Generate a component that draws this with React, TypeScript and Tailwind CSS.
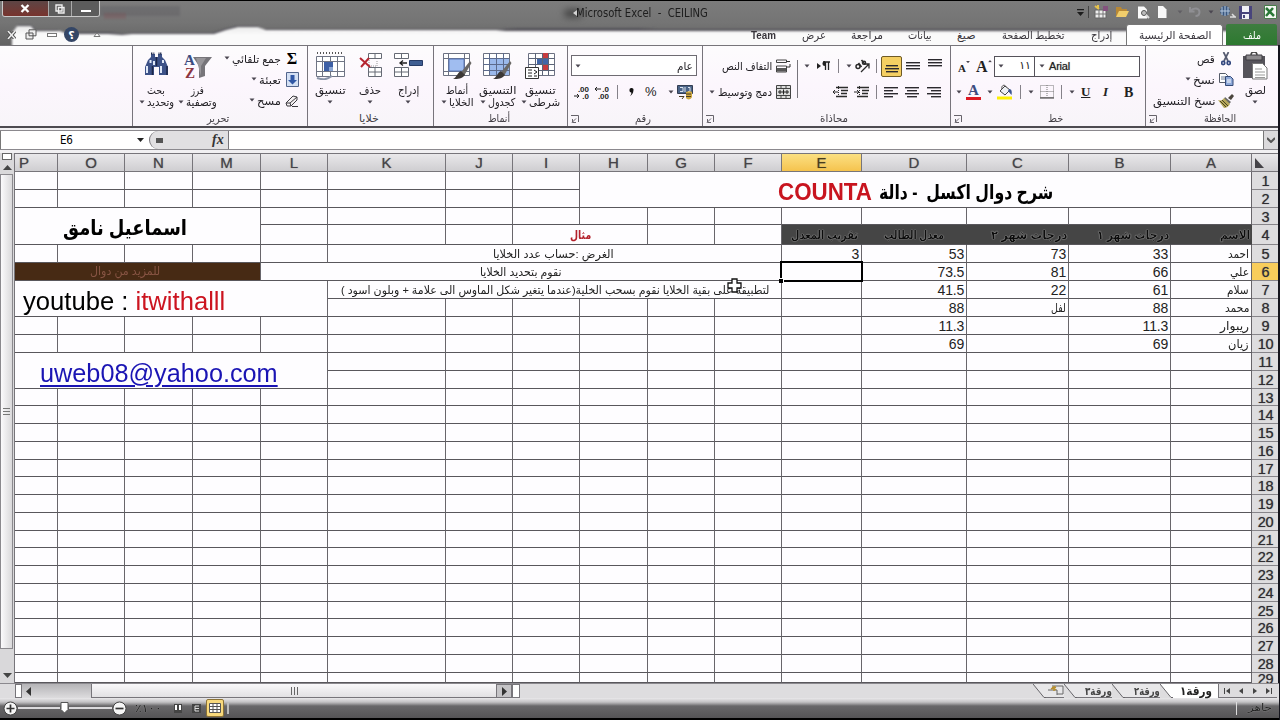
import React, { useLayoutEffect, useRef, useState } from "react";

const FONT = "font-['Liberation_Sans','DejaVu_Sans',sans-serif]";

/* Text squeezed or stretched to a given width. */
function Fit({ w, children, className = "" }: { w: number; children: React.ReactNode; className?: string }) {
  const ref = useRef<HTMLSpanElement>(null);
  const [scale, setScale] = useState(1);
  useLayoutEffect(() => {
    if (ref.current && ref.current.offsetWidth) setScale(w / ref.current.offsetWidth);
  }, [w]);
  return (
    <div className={"flex shrink-0 " + className} style={{ width: w }} dir="ltr">
      <span ref={ref} dir="auto" className="inline-block shrink-0 origin-left whitespace-pre" style={{ transform: `scaleX(${scale})` }}>
        {children}
      </span>
    </div>
  );
}

function Arrow({ className = "" }: { className?: string }) {
  return (
    <svg className={"h-[4px] w-[6px] shrink-0 " + className} viewBox="0 0 6 4">
      <path d="M.5 .5h5L3 3.5z" fill="#4a4650" />
    </svg>
  );
}

function Sep({ className = "" }: { className?: string }) {
  return <div className={"h-[14px] w-px shrink-0 bg-[#858189] " + className} />;
}

function Launcher() {
  return (
    <svg className="h-[8px] w-[8px] shrink-0" viewBox="0 0 8 8" fill="none" stroke="#66636a">
      <path d="M0 .5h7.5V7M1 7.500L5 3.500M1.500 4v3.500H5" />
    </svg>
  );
}

function Lines({ rows, className = "" }: { rows: number[][]; className?: string }) {
  return (
    <svg className={"h-[12px] w-[14px] shrink-0 " + className} viewBox="0 0 14 12">
      {rows.map(([x, w, y]) => (
        <rect key={y} x={x} y={y} width={w} height="1.400" fill="#2b292e" />
      ))}
    </svg>
  );
}

function Binoculars() {
  return (
    <svg className="h-[24px] w-[27px]" viewBox="0 0 27 24">
      <path d="M8 2h4v3h3V2h4v3l3 3 3 7v8h-9v-8h-5v8H2v-8l3-7 3-3z" fill="#3d5288" />
      <path d="M8 1.500h3.500M15.500 1.500H19" stroke="#222c4c" strokeWidth="2" strokeDasharray="1 .6" />
      <path d="M4 14v7M7.500 8v3M11 9v4M18 14v7M20 8v3" stroke="#dfe8f8" strokeWidth="2" />
      <path d="M9.500 14v9M24 14v9M13.500 5v9" stroke="#1c2748" strokeWidth="1.500" />
    </svg>
  );
}

function SortFilter() {
  return (
    <svg className="h-[28px] w-[30px]" viewBox="0 0 30 28">
      <path d="M10 5h19l-7 9v10l-6 2V14z" fill="#77757a" />
      <path d="M13 6h10l-5 8v10" fill="#98969a" />
      <text x="1" y="12.500" fontSize="15" fontWeight="bold" fontFamily="Liberation Serif, serif" fill="#3a4c80">A</text>
      <text x="2" y="25.500" fontSize="15" fontWeight="bold" fontFamily="Liberation Serif, serif" fill="#8b3440">Z</text>
    </svg>
  );
}

function FormatCells() {
  return (
    <svg className="h-[28px] w-[29px]" viewBox="0 0 29 28" fill="none">
      <path d="M1 1h25" stroke="#555" strokeWidth="2" strokeDasharray="1 2" />
      <path d="M.5 4.500h28v20H.5zM.5 9.500h28M.5 19.500h28M6.500 4v20M21.500 4v20M14.500 4v5M14.500 19v5" fill="#fff" stroke="#6f7484" />
      <path d="M8 10h9v9H8z" fill="#3d5fa5" />
      <path d="M13 15h4v4h-4z" fill="#8ba6d4" />
      <path d="M1 26c6 2 9 2 15-2" stroke="#8a94a8" strokeWidth="2" />
    </svg>
  );
}

function DeleteCells() {
  return (
    <svg className="h-[26px] w-[23px]" viewBox="0 0 23 26" fill="none">
      <path d="M9.500 1.500h13v5h-13zM9.500 15.500h13v9h-13zM9.500 20h13M16 1v5M16 15v9" fill="#fff" stroke="#666a74" />
      <path d="M10 8v6h8V8" stroke="#999" strokeDasharray="1 1" />
      <path d="M1 6l10 9M10 6L2 15" stroke="#b52530" strokeWidth="2" />
    </svg>
  );
}

function InsertCells() {
  return (
    <svg className="h-[26px] w-[29px]" viewBox="0 0 29 26" fill="none">
      <path d="M.5 1.500h14v5H.5zM.5 15.500h14v9H.5zM.5 20h14M7.500 1v5M7.500 15v9" fill="#fff" stroke="#666a74" />
      <path d="M15.500 8.500h13v5h-13z" fill="#3f5e92" stroke="#263b66" />
      <path d="M6 11h7M9 8.500L6 11l3 2.500" stroke="#222" strokeWidth="1.300" />
    </svg>
  );
}

function Brush() {
  return (
    <>
      <path d="M27 9l1.500 2-7 12-4-2z" fill="#6a6866" />
      <path d="M18 19l4 4c-3 4-7 4-12 4 4-2 4-6 8-8z" fill="#3c3836" />
    </>
  );
}

function CellStyles() {
  return (
    <svg className="h-[28px] w-[29px]" viewBox="0 0 29 28" fill="none">
      <path d="M.5 1.500h26v22H.5zM.5 6.500h26M.5 19.500h26M5.500 1v22M21.500 1v22" fill="#fff" stroke="#6c7182" />
      <path d="M6 7h15v12H6z" fill="#a0bdf0" stroke="#5877b8" />
      <Brush />
    </svg>
  );
}

function FormatTable() {
  return (
    <svg className="h-[28px] w-[29px]" viewBox="0 0 29 28" fill="none">
      <path d="M.5 1.500h26v22H.5z" fill="#fff" stroke="#6c7182" />
      <path d="M7 7h19v16H7z" fill="#9bb9ec" />
      <path d="M.5 6.500h26M.5 12.500h26M.5 18.500h26M6.500 1v22M13.500 1v22M20.500 1v22" stroke="#5c6a8c" />
      <Brush />
    </svg>
  );
}

function Conditional() {
  return (
    <svg className="h-[28px] w-[30px]" viewBox="0 0 30 28" fill="none">
      <path d="M3.500 1.500h26v22h-26z" fill="#fff" stroke="#6c7182" />
      <path d="M17 1h6v6h-6zM17 12h6v6h-6z" fill="#c63b3e" />
      <path d="M12 7h11v5H12z" fill="#4166a8" />
      <path d="M3.500 6.500h26M3.500 12.500h26M3.500 18.500h26M10.500 1v22M17.500 1v22M23.500 1v22" stroke="#5c6478" />
      <path d="M.5 15.500h13v11H.5z" fill="#fff" stroke="#333" />
      <path d="M3 18h4M3 21h4M3 24h4M9 18l3 2-3 2M9 24h3" stroke="#222" />
    </svg>
  );
}

function Money() {
  return (
    <svg className="h-[16px] w-[16px]" viewBox="0 0 16 16" fill="none">
      <path d="M.5 1.500h15v8H.5z" fill="#4a6387" stroke="#333d52" />
      <path d="M3 3.500h3v4H3M8 3v5M11 3.500h2v4h-2" stroke="#dde5f0" />
      <path d="M9 8c2-1 5-1 6 0v5c-1 3-5 3-6 1z" fill="#cfa942" />
      <path d="M9 10h5M9 12.500h5M2 12.500h5l-2 2.500" stroke="#4b3d20" />
    </svg>
  );
}

function Decimals({ top, bottom, arrow }: { top: string; bottom: string; arrow: string }) {
  return (
    <svg className="h-[14px] w-[16px] shrink-0" viewBox="0 0 16 14" fill="none">
      <text x="15" y="6.500" fontSize="8" fontWeight="bold" textAnchor="end" fontFamily="Liberation Sans, sans-serif" fill="#222">{top}</text>
      <text x="15" y="13.500" fontSize="8" fontWeight="bold" textAnchor="end" fontFamily="Liberation Sans, sans-serif" fill="#222">{bottom}</text>
      <path d={arrow} stroke="#222" />
    </svg>
  );
}

function WrapIcon() {
  return (
    <svg className="h-[14px] w-[15px] shrink-0" viewBox="0 0 15 14" fill="none">
      <path d="M.5 1h10v2.500H.5zM.5 7h10v6H.5z" stroke="#444" />
      <path d="M1 9h9v3.500H1z" fill="#555" />
      <path d="M10 2.500h4M14 5v3h-3" stroke="#333" />
    </svg>
  );
}

function MergeIcon() {
  return (
    <svg className="h-[14px] w-[15px] shrink-0" viewBox="0 0 15 14" fill="none">
      <path d="M.5 .5h14v13H.5zM.5 3.500h14M.5 10.500h14M5 0v3M10 0v3M5 11v3M10 11v3" fill="#ddd" stroke="#444" />
      <path d="M2 7h11M4 5v4M11 5v4M7.500 4.500v5" stroke="#222" />
    </svg>
  );
}

function ParagraphDir() {
  return (
    <svg className="h-[10px] w-[14px] shrink-0" viewBox="0 0 14 10" fill="none">
      <path d="M1 2l4 3-4 3z" fill="#222" />
      <path d="M9.500 1v8M12.500 1v8M7 1h7" stroke="#222" strokeWidth="1.300" />
      <path d="M9 0a2.300 2.300 0 0 0 0 5z" fill="#222" />
    </svg>
  );
}

function Orientation() {
  return (
    <svg className="h-[14px] w-[15px] shrink-0" viewBox="0 0 15 14" fill="none" stroke="#2b2b2b">
      <path d="M6 13l7.500-7.500M14 9.500V5H9.500" strokeWidth="1.300" />
      <circle cx="3" cy="7.500" r="2" strokeWidth="1.500" />
      <path d="M3.500 4l3 4M6.500 1l3.500 4.500" strokeWidth="1.600" />
      <circle cx="9" cy="3.800" r="1.600" strokeWidth="1.400" />
    </svg>
  );
}

function Indent({ flip = false }: { flip?: boolean }) {
  return (
    <svg className="h-[12px] w-[15px] shrink-0" viewBox="0 0 15 12" fill="none" stroke="#2b2b2b">
      <path d="M3 1.500h12M8 4.500h7M8 7.500h6M3 10.500h11" strokeWidth="1.300" />
      <path d="M5.500 0v12" strokeDasharray="1 1" />
      <path d={flip ? "M0 6h5M3 4l2 2-2 2" : "M0 6h5M2 4L0 6l2 2"} />
    </svg>
  );
}

function Bucket() {
  return (
    <svg className="h-[16px] w-[16px] shrink-0" viewBox="0 0 16 16" fill="none">
      <path d="M3 7l5-5 5 4-5 5z" fill="#eef0f4" stroke="#444" />
      <path d="M5 5c-1-4 3-5 4-2" stroke="#444" />
      <path d="M12 5c3 0 3 3 2.500 6L11 7z" fill="#3b5590" />
      <path d="M0 12.500h15V15.500H0z" fill="#fdf003" />
    </svg>
  );
}

function Borders() {
  return (
    <svg className="h-[14px] w-[14px] shrink-0" viewBox="0 0 14 14" fill="none" stroke="#777">
      <path d="M.5 .5h13v12H.5zM.5 6.500h13M7 0v12" strokeDasharray="1 1" />
      <path d="M0 13h14" stroke="#333" />
    </svg>
  );
}

function Eraser() {
  return (
    <svg className="h-[12px] w-[14px] shrink-0" viewBox="0 0 14 12" fill="none" stroke="#3c3a40">
      <path d="M1 8l7-7 4 1v3l-6 6H2z" fill="#f6f2f4" />
      <path d="M1 8h4l1 3M5 8l7-6M7 11.500h6" />
    </svg>
  );
}

function FillIcon() {
  return (
    <svg className="h-[15px] w-[13px] shrink-0" viewBox="0 0 13 15" fill="none">
      <path d="M.5 .5h12v14H.5z" fill="#d4e0f4" stroke="#52658c" />
      <path d="M4.500 3h4v5h2.500L6.500 12.500 2 8h2.500z" fill="#3158a6" />
    </svg>
  );
}

function Scissors() {
  return (
    <svg className="h-[14px] w-[10px] shrink-0" viewBox="0 0 10 14" fill="none" stroke="#34497f" strokeWidth="1.700">
      <path d="M2.500 0L7 9M7.500 0L3 9" stroke="#555b70" />
      <circle cx="2.200" cy="11" r="1.600" />
      <circle cx="7.700" cy="11" r="1.600" />
    </svg>
  );
}

function CopyIcon() {
  return (
    <svg className="h-[13px] w-[15px] shrink-0" viewBox="0 0 15 13" fill="none">
      <path d="M.5 .5h6l2 2v7h-8z" fill="#fff" stroke="#555b68" />
      <path d="M2 4h4M2 6h4" stroke="#6e7c96" />
      <path d="M6.500 3.500h5l2.500 2.500v6.500H6.500z" fill="#8ea8d8" stroke="#344a78" />
      <path d="M8 7h4M8 9h4" stroke="#fff" />
    </svg>
  );
}

function Painter() {
  return (
    <svg className="h-[14px] w-[16px] shrink-0" viewBox="0 0 16 14">
      <path d="M10 4l4-4 2 2-3 4z" fill="#4a443c" />
      <path d="M7 3l6 5-2 2-5-5z" fill="#666" />
      <path d="M6 4l6 6c-2 3-4 4-6 4L0 6c3 1 5 0 6-2z" fill="#b5a75a" />
      <path d="M2 7l6 6M4 6l6 6" stroke="#4a4320" />
    </svg>
  );
}

function PasteIcon() {
  return (
    <svg className="h-[29px] w-[25px] shrink-0" viewBox="0 0 25 29" fill="none">
      <path d="M0 4h22v22H0z" fill="#55535a" />
      <path d="M3 3h16v5H3z" fill="#8b898c" stroke="#3f3d42" />
      <path d="M8 3c0-4 6-4 6 0" stroke="#444" strokeWidth="1.500" />
      <path d="M9.500 11.500h10l4.500 4.500v11H9.500z" fill="#fff" stroke="#777" />
      <path d="M12 17h7M12 20h10M12 23h10M12 25.500h10" stroke="#999" />
    </svg>
  );
}

function Group({ w, label, lw, lx, launch = 0, children }: { w: string; label: string; lw: number; lx: string; launch?: number; children: React.ReactNode }) {
  return (
    <div className={"flex h-[80px] shrink-0 flex-col border-l border-[#77747b] " + w}>
      <div className="flex h-[66px]">{children}</div>
      <div className="flex h-[13px] items-center">
        <div className="flex w-[14px] shrink-0 justify-center">{launch ? <Launcher /> : null}</div>
        <Fit w={lw} className={"text-[11px] leading-[13px] text-[#413e44] " + lx}>{label}</Fit>
      </div>
    </div>
  );
}

function Big({ w, icon, a, aw, b, bw }: { w: string; icon: React.ReactNode; a: string; aw: number; b?: string; bw?: number }) {
  return (
    <div className={"flex shrink-0 flex-col items-center pt-[6px] " + w}>
      <div className="flex h-[32px] items-start">{icon}</div>
      <Fit w={aw} className="h-[12px] text-[11px] leading-[12px]">{a}</Fit>
      <div className="flex h-[12px] items-center gap-[2px]">
        <Arrow />
        {b ? <Fit w={bw || 20} className="text-[11px] leading-[12px]">{b}</Fit> : null}
      </div>
    </div>
  );
}

function SmallRow({ text, tw, icon, arrow = true }: { text: string; tw: number; icon: React.ReactNode; arrow?: boolean }) {
  return (
    <div className="flex h-[21px] items-center justify-end">
      {arrow ? <Arrow className="mr-[2px] mb-[2px]" /> : null}
      <Fit w={tw} className="text-[11px] leading-[14px]">{text}</Fit>
      <div className="ml-[2px] flex w-[18px] justify-center">{icon}</div>
    </div>
  );
}

const full = [[0, 14, 0], [0, 14, 3], [0, 14, 6]];

function Ribbon() {
  return (
    <div className="flex h-[80px] w-full bg-gradient-to-b from-[#fdfcfd] via-[#fcf6fd] to-[#f8f5f9] text-[#222025]">
      <div className="w-[132px] shrink-0" />
      <Group w="w-[175px]" label="تحرير" lw={22} lx="ml-[60px]">
        <Big w="w-[46px]" icon={<Binoculars />} a="بحث" aw={18} b="وتحديد" bw={27} />
        <Big w="w-[37px]" icon={<SortFilter />} a="فرز" aw={13} b="وتصفية" bw={31} />
        <div className="flex w-[85px] flex-col pt-[2px]">
          <SmallRow text="جمع تلقائي" tw={49} icon={<span className="text-[16px] leading-[18px] font-bold font-['Liberation_Serif',serif] text-black">Σ</span>} />
          <SmallRow text="تعبئة" tw={22} icon={<FillIcon />} />
          <SmallRow text="مسح" tw={24} icon={<Eraser />} />
        </div>
      </Group>
      <Group w="w-[126px]" label="خلايا" lw={20} lx="ml-[37px]">
        <Big w="w-[44px]" icon={<FormatCells />} a="تنسيق" aw={31} />
        <Big w="w-[36px]" icon={<DeleteCells />} a="حذف" aw={22} />
        <Big w="w-[40px]" icon={<InsertCells />} a="إدراج" aw={21} />
      </Group>
      <Group w="w-[134px]" label="أنماط" lw={22} lx="ml-[40px]">
        <Big w="w-[46px]" icon={<CellStyles />} a="أنماط" aw={22} b="الخلايا" bw={25} />
        <Big w="w-[34px]" icon={<FormatTable />} a="التنسيق" aw={37} b="كجدول" bw={27} />
        <Big w="w-[52px]" icon={<Conditional />} a="تنسيق" aw={31} b="شرطى" bw={31} />
      </Group>
      <Group w="w-[135px]" label="رقم" lw={16} lx="ml-[53px]" launch={1}>
        <div className="flex flex-col pt-[9px] pl-[3px]">
          <div className="flex h-[21px] w-[126px] items-center justify-between border border-[#6e6b72] bg-white px-[3px]">
            <Arrow />
            <Fit w={16} className="text-[11px] leading-[14px]">عام</Fit>
          </div>
          <div className="mt-[3px] flex h-[26px] items-center">
            <div className="ml-[3px]"><Decimals top=".00" bottom=".0" arrow="M0 11h5M3 9l2 2-2 2" /></div>
            <div className="ml-[4px]"><Decimals top=".0" bottom=".00" arrow="M1 4h6M3 2L1 4l2 2" /></div>
            <Sep className="ml-[7px]" />
            <svg className="ml-[11px] h-[9px] w-[5px] shrink-0" viewBox="0 0 5 9"><path d="M.5 2.300a2 2 0 1 1 3.900.3C4.400 5 3 7 1 8.300c1-1.500 1.500-2.500 1.300-3.800A2 2 0 0 1 .5 2.300z" fill="#111" /></svg>
            <span className="ml-[11px] w-[12px] text-[13px] leading-[14px] text-[#222]">%</span>
            <Arrow className="ml-[11px]" />
            <div className="ml-[3px]"><Money /></div>
          </div>
        </div>
      </Group>
      <Group w="w-[248px]" label="محاذاة" lw={28} lx="ml-[103px]" launch={1}>
        <div className="flex w-[94px] flex-col items-end pt-[7px] pr-[6px]">
          <div className="flex h-[26px] items-center gap-[4px]">
            <Fit w={50} className="text-[11px] leading-[14px]">التفاف النص</Fit>
            <WrapIcon />
          </div>
          <div className="flex h-[26px] items-center gap-[4px]">
            <Arrow className="-mr-[1px]" />
            <Fit w={54} className="text-[11px] leading-[14px]">دمج وتوسيط</Fit>
            <MergeIcon />
          </div>
        </div>
        <div className="mt-[14px] h-[38px] w-px bg-[#77747b]" />
        <div className="flex flex-col pt-[7px]">
          <div className="flex h-[26px] items-center">
            <Arrow className="ml-[6px]" />
            <div className="ml-[6px]"><ParagraphDir /></div>
            <Sep className="ml-[8px]" />
            <Arrow className="ml-[7px]" />
            <div className="ml-[3px]"><Orientation /></div>
            <Sep className="ml-[6px]" />
            <div className="ml-[4px] flex h-[21px] w-[21px] items-center justify-center rounded-[2px] border border-[#6e5a26] bg-[#f5cf62]">
              <Lines rows={[[1, 12, 2], [0, 14, 5], [1, 12, 8]]} className="mt-[5px]" />
            </div>
            <Lines rows={full} className="mt-[4px] ml-[4px]" />
            <Lines rows={full} className="-mt-[3px] ml-[8px]" />
          </div>
          <div className="flex h-[26px] items-center">
            <div className="ml-[35px]"><Indent /></div>
            <div className="ml-[6px]"><Indent flip /></div>
            <Sep className="ml-[7px]" />
            <Lines rows={[[0, 14, 1], [0, 9, 4], [0, 14, 7], [0, 9, 10]]} className="ml-[7px]" />
            <Lines rows={[[0, 14, 1], [2, 10, 4], [0, 14, 7], [2, 10, 10]]} className="ml-[7px]" />
            <Lines rows={[[0, 14, 1], [4, 10, 4], [0, 14, 7], [4, 10, 10]]} className="ml-[8px]" />
          </div>
        </div>
      </Group>
      <Group w="w-[195px]" label="خط" lw={15} lx="ml-[83px]" launch={1}>
        <div className="flex flex-col pt-[9px] pl-[7px] font-['Liberation_Serif',serif] font-bold text-[#222]">
          <div className="flex h-[22px] items-center">
            <span className="w-[7px] pt-[3px] text-[11px] leading-[14px]">A</span>
            <Arrow className="-mt-[8px] scale-75" />
            <span className="ml-[5px] w-[11px] pt-[2px] text-[16px] leading-[18px]">A</span>
            <Arrow className="-mt-[10px] rotate-180 scale-75" />
            <div className="ml-[1px] flex h-[21px] w-[41px] items-center justify-between border border-[#55525a] bg-white pr-[3px] pl-[3px]">
              <Arrow />
              <span className="text-[11px] font-normal font-['DejaVu_Sans',sans-serif]">١١</span>
            </div>
            <div className="flex h-[21px] w-[105px] items-center border border-l-0 border-[#55525a] bg-white pl-[4px]">
              <Arrow />
              <span className="ml-[4px] text-[11px] font-normal tracking-[-0.200px] font-['Liberation_Sans',sans-serif] [text-shadow:0_0_1px_#777]">Arial</span>
            </div>
          </div>
          <div className="mt-[2px] flex h-[26px] items-center">
            <Arrow className="-ml-[2px]" />
            <div className="ml-[4px] flex h-[16px] w-[15px] flex-col items-center border-b-[3px] border-[#dd1822]">
              <span className="text-[15px] leading-[13px] text-[#3c4c80]">A</span>
            </div>
            <Arrow className="ml-[6px]" />
            <div className="ml-[4px]"><Bucket /></div>
            <Sep className="ml-[7px]" />
            <Arrow className="ml-[7px]" />
            <div className="ml-[6px]"><Borders /></div>
            <Sep className="ml-[7px]" />
            <Arrow className="ml-[7px]" />
            <span className="ml-[6px] w-[10px] text-[13px] underline">U</span>
            <span className="ml-[12px] w-[10px] text-[13px] italic">I</span>
            <span className="ml-[11px] w-[10px] text-[14px]">B</span>
          </div>
        </div>
      </Group>
      <Group w="w-[133px]" label="الحافظة" lw={32} lx="ml-[44px]" launch={1}>
        <div className="flex w-[89px] flex-col pt-[2px]">
          <SmallRow text="قص" tw={18} icon={<Scissors />} arrow={false} />
          <SmallRow text="نسخ" tw={22} icon={<CopyIcon />} />
          <SmallRow text="نسخ التنسيق" tw={62} icon={<Painter />} arrow={false} />
        </div>
        <Big w="w-[40px]" icon={<PasteIcon />} a="لصق" aw={21} />
      </Group>
    </div>
  );
}

function TitleBar() {
  return (
    <div className="flex h-[24px] w-full items-start">
      <div className="ml-[2px] flex h-[16px] w-[98px] shrink-0 overflow-hidden rounded-b-[3px] border border-t-0 border-[#c9c9c9]">
        <div className="flex w-[46px] items-center justify-center border-r border-[#aaa] bg-gradient-to-b from-[#5d4545] to-[#78332e]">
          <svg className="h-[9px] w-[10px]" viewBox="0 0 10 9"><path d="M1.500 1l7 7M8.500 1l-7 7" stroke="#fff" strokeWidth="2.300" /></svg>
        </div>
        <div className="flex w-[24px] items-center justify-center border-r border-[#aaa] bg-[#5c5c5c]">
          <svg className="h-[10px] w-[10px]" viewBox="0 0 10 10" fill="none" stroke="#eee" strokeWidth="1.400"><path d="M1 1h6v6H1zM3.500 3.500H9V9H3.500z" /></svg>
        </div>
        <div className="flex w-[27px] items-center justify-center bg-[#5c5c5c] pt-[4px]"><div className="h-[2px] w-[10px] bg-white" /></div>
      </div>
      <div className="ml-[464px] flex h-[24px] items-center">
        <div className="mr-[-9px] h-[9px] w-[18px] rounded-full bg-[#4a4a4a] blur-[3px]" />
        <svg className="relative mr-[-2px] h-[6px] w-[5px]" viewBox="0 0 5 6"><path d="M4 0v6L0 3z" fill="#d5d5d5" /></svg>
        <Fit w={132} className="text-[12px] leading-[16px] text-[#1d1d1d] font-['DejaVu_Sans_Condensed','DejaVu_Sans',sans-serif]">Microsoft Excel  -  CEILING</Fit>
      </div>
      <div className="ml-auto flex h-[22px] items-center">
        <svg className="h-[7px] w-[7px]" viewBox="0 0 7 7"><path d="M0 0h7v1.200H0zM0 3h7L3.500 7z" fill="#1c1c1c" /></svg>
        <div className="ml-[4px] h-[12px] w-px bg-[#444]" />
        <svg className="ml-[5px] h-[14px] w-[15px]" viewBox="0 0 15 14" fill="none"><path d="M1 5h11v8H1z" fill="#eee" stroke="#666" /><path d="M1 9h11M5 5v8M9 5v8" stroke="#777" /><path d="M1 1l4 3M4 0v4" stroke="#e7c34b" strokeWidth="2" /><path d="M9 1h5v5H9z" fill="#83527d" /></svg>
        <svg className="ml-[6px] h-[12px] w-[14px]" viewBox="0 0 14 12"><path d="M1 1h5l1 2h5v3H4l-3 5z" fill="#b88835" /><path d="M4 5h10l-3 6H1z" fill="#f0cd6c" /></svg>
        <svg className="ml-[8px] h-[13px] w-[13px]" viewBox="0 0 13 13" fill="none"><path d="M1 .5h6l3 3v9H1z" fill="#fafafa" /><circle cx="7" cy="7" r="2.500" fill="#bbb" stroke="#555" /><path d="M9 9l3 3" stroke="#ddd" strokeWidth="2" /></svg>
        <svg className="ml-[8px] h-[12px] w-[9px]" viewBox="0 0 9 12"><path d="M0 0h5l3.500 3.500V12H0z" fill="#f8f8f8" /></svg>
        <Arrow className="ml-[10px] opacity-50" />
        <svg className="ml-[6px] h-[10px] w-[12px]" viewBox="0 0 12 10" fill="none" stroke="#8f8f93" strokeWidth="2"><path d="M1 0v4.500h4.500M1.500 4c3-4 9-3 9 1 0 3-2 4-4 4" /></svg>
        <Arrow className="ml-[7px]" />
        <svg className="ml-[5px] h-[14px] w-[18px]" viewBox="0 0 18 14" fill="none"><circle cx="6" cy="6" r="5" fill="#38567f" /><path d="M1 6h10M6 1v10M3 2v8M9 2v8" stroke="#b9cbe0" /><path d="M11 12h6M13 9l3 3" stroke="#ddd" strokeWidth="1.500" /></svg>
        <svg className="ml-[2px] h-[13px] w-[13px]" viewBox="0 0 13 13"><path d="M0 0h13v13H0z" fill="#48447c" /><path d="M3 0h7v6H3zM3 8h7v5H3z" fill="#f1f1f6" /><path d="M4 9h2v3H4z" fill="#48447c" /></svg>
        <svg className="mr-[3px] ml-[12px] h-[14px] w-[13px]" viewBox="0 0 13 14" fill="none"><path d="M.5 .5h12v13H.5z" fill="#f4f8f3" stroke="#477d4a" /><path d="M2 3l8 8M9 3l-7 8" stroke="#2a7837" strokeWidth="2.500" /></svg>
      </div>
    </div>
  );
}

function Tab({ text, w, ml }: { text: string; w: number; ml: string }) {
  return <Fit w={w} className={"pt-[1px] text-[11px] leading-[20px] text-[#38353b] " + ml}>{text}</Fit>;
}

function Header() {
  return (
    <div className="relative h-[45px] w-full shrink-0 overflow-hidden border-t border-black bg-gradient-to-b from-[#7c7c7c] via-[#747474] to-[#626262]">
      <svg className="absolute inset-0 h-[45px] w-full" viewBox="0 0 1280 45" preserveAspectRatio="none">
        <defs>
          <filter id="soft" x="-2%" y="-30%" width="104%" height="160%"><feGaussianBlur stdDeviation="1" /></filter>
          <linearGradient id="tabs" x1="0" y1="0" x2="0" y2="1"><stop offset="0" stopColor="#e8e8e8" /><stop offset=".35" stopColor="#fafafa" /></linearGradient>
        </defs>
        <path d="M100 5h80v10h-80z" fill="#4e4b52" opacity=".25" filter="url(#soft)" />
        <path d="M104 12h22v6h-22z" fill="#8b3a40" opacity=".2" filter="url(#soft)" />
        <path d="M13 46V31l5-7h13l5 5h20l8 2h46l12 2 10-1h80l12-4 12-3h22l4 3h240l16-1h120l20 1h600v18z" fill="#55535a" filter="url(#soft)" />
        <path d="M12 48V32l5-7h14l4 5h25l8 3h40l14 1 10-1h82l12-4 12-3h20l8 3h230l10 1h760v20z" fill="url(#tabs)" filter="url(#soft)" />
      </svg>
      <div className="relative flex h-[44px] w-full flex-col">
        <div className="h-[23px]"><TitleBar /></div>
        <div className="flex h-[21px] items-center">
          <svg className="ml-[7px] h-[8px] w-[9px]" viewBox="0 0 9 8"><path d="M1 0l7 8M8 0L1 8" stroke="#555" strokeWidth="3.500" /><path d="M1 0l7 8M8 0L1 8" stroke="#eee" strokeWidth="1.500" /></svg>
          <svg className="ml-[9px] h-[11px] w-[12px]" viewBox="0 0 12 11" fill="#eee" stroke="#555"><path d="M4 .8h7v6H4zM1 4h7v6H1z" /></svg>
          <div className="ml-[10px] h-[4px] w-[10px] border border-[#777] bg-white" />
          <div className="ml-[7px] flex h-[15px] w-[15px] items-center justify-center rounded-full bg-[#344666] text-[11px] leading-[14px] font-bold text-white">؟</div>
          <svg className="ml-[14px] h-[6px] w-[8px]" viewBox="0 0 8 6" fill="#fff" stroke="#777"><path d="M1 4.500L4 1l3 3.500z" /></svg>
          <Tab text="Team" w={25} ml="ml-[650px] font-bold" />
          <Tab text="عرض" w={24} ml="ml-[26px]" />
          <Tab text="مراجعة" w={32} ml="ml-[25px]" />
          <Tab text="بيانات" w={24} ml="ml-[25px]" />
          <Tab text="صيغ" w={19} ml="ml-[25px]" />
          <Tab text="تخطيط الصفحة" w={63} ml="ml-[26px]" />
          <Tab text="إدراج" w={21} ml="ml-[26px]" />
          <div className="ml-auto flex h-[21px] w-[97px] shrink-0 items-center justify-center rounded-t-[3px] border border-b-0 border-[#777] bg-white">
            <Fit w={72} className="pt-[1px] pr-[3px] text-[11px] leading-[19px] text-[#38353c]">الصفحة الرئيسية</Fit>
          </div>
          <div className="mr-[3px] ml-[3px] flex h-[21px] w-[51px] shrink-0 items-center justify-center rounded-t-[2px] bg-gradient-to-b from-[#3e7d40] to-[#2c792f]">
            <Fit w={18} className="pt-[1px] text-[11px] leading-[19px] text-white">ملف</Fit>
          </div>
        </div>
      </div>
    </div>
  );
}

function FormulaBar() {
  return (
    <div className="flex h-[27px] w-full shrink-0 flex-col border-t-[2px] border-[#4d4b50] bg-[#f1f0f2]">
      <div className="mt-[2px] flex h-[20px] border-y border-[#8b898e] bg-white">
        <div className="flex w-[149px] items-center border-l border-[#777]">
          <span className="ml-[59px] w-[14px] text-[11.500px] leading-[18px] tracking-[-0.300px] text-black font-['DejaVu_Sans_Condensed',sans-serif]">E6</span>
          <svg className="ml-[63px] h-[4px] w-[7px]" viewBox="0 0 7 4"><path d="M0 0h7L3.500 4z" fill="#222" /></svg>
        </div>
        <div className="flex w-[80px] items-center rounded-l-full border-r border-l border-[#77757a] bg-[#e1e0e2]">
          <div className="ml-[6px] h-[5px] w-[7px] bg-[#555]" />
          <span className="ml-[49px] text-[14px] leading-[16px] font-bold text-[#333] italic font-['Liberation_Serif',serif]">fx</span>
        </div>
        <div className="ml-auto flex w-[15px] items-center justify-center border-l border-[#777] bg-[#dbdadc]">
          <svg className="h-[6px] w-[8px]" viewBox="0 0 8 6" fill="none"><path d="M0 1l4 4 4-4" stroke="#555" strokeWidth="2" /></svg>
        </div>
      </div>
    </div>
  );
}

const COLS = "grid grid-cols-[43px_67px_68px_68px_67px_118px_67px_67px_68px_67px_67px_80px_105px_102px_102px_81px_26px]";
const LETTERS = ["P", "O", "N", "M", "L", "K", "J", "I", "H", "G", "F", "E", "D", "C", "B", "A"];

type Special = { row: number; col: number; rs: number; cs: number; cls: string; body: React.ReactNode };

const num = (row: number, col: number, v: string): Special => ({
  row, col, rs: 1, cs: 1,
  cls: "justify-end pr-[2px] text-[14px] tracking-[-0.200px] text-[#222]",
  body: v,
});
const ar = (row: number, col: number, v: string, w: number): Special => ({
  row, col, rs: 1, cs: 1, cls: "justify-end pr-[2px]",
  body: <Fit w={w} className="text-[12px] leading-[16px] text-[#222]">{v}</Fit>,
});
const head = (col: number, v: string, w: number, align: string): Special => ({
  row: 4, col, rs: 1, cs: 1, cls: "bg-[#454545] border-r-[#454545] " + align,
  body: <Fit w={w} className="text-[12px] leading-[18px] font-bold text-[#0c0c0c] [text-shadow:0_0_1px_#d5d5d5,0_0_1px_#aaaaaa]">{v}</Fit>,
});

const SPECIALS: Special[] = [
  {
    row: 1, col: 9, rs: 2, cs: 8, cls: "justify-center pt-[5px]",
    body: (
      <div className="flex items-center gap-[7px] text-[24px] leading-[32px] font-bold">
        <Fit w={94} className="text-[#c8141f]">COUNTA</Fit>
        <Fit w={174} className="text-[20px] text-black">شرح دوال اكسل  - دالة</Fit>
      </div>
    ),
  },
  { row: 3, col: 1, rs: 2, cs: 4, cls: "justify-center pt-[3px] pr-[26px]", body: <Fit w={124} className="text-[21px] leading-[34px] font-bold text-black">اسماعيل نامق</Fit> },
  { row: 4, col: 8, rs: 1, cs: 2, cls: "justify-center", body: <Fit w={21} className="text-[12px] leading-[18px] font-bold text-[#b3202b]">مثال</Fit> },
  { row: 5, col: 6, rs: 1, cs: 6, cls: "justify-center pr-[3px]", body: <Fit w={121} className="text-[11.500px] leading-[16px] text-[#222]">الغرض :حساب عدد الخلايا</Fit> },
  { row: 6, col: 1, rs: 1, cs: 4, cls: "justify-center pr-[26px] bg-[#472a14]", body: <Fit w={70} className="text-[12px] leading-[17px] text-[#875443]">للمزيد من دوال</Fit> },
  { row: 6, col: 5, rs: 1, cs: 7, cls: "justify-center", body: <Fit w={82} className="text-[11.500px] leading-[16px] text-[#222]">نقوم بتحديد الخلايا</Fit> },
  { row: 7, col: 1, rs: 2, cs: 5, cls: "pt-[4px] pl-[8px]", body: <Fit w={202} className="text-[26px] leading-[34px] text-black">youtube : <span className="text-[#cc1420]">itwithalll</span></Fit> },
  { row: 7, col: 6, rs: 1, cs: 6, cls: "justify-end pt-px pr-[12px]", body: <Fit w={428} className="text-[11.500px] leading-[16px] text-[#222]">لتطبيقة على بقية الخلايا نقوم بسحب الخلية(عندما يتغير شكل الماوس الى علامة + وبلون اسود )</Fit> },
  { row: 11, col: 1, rs: 2, cs: 5, cls: "pt-[4px] pl-[25px]", body: <Fit w={238} className="text-[26px] leading-[34px] text-[#1a14b4] underline decoration-[1.500px] underline-offset-[3px]">uweb08@yahoo.com</Fit> },
  head(12, "تقريب المعدل", 67, "justify-center pl-[6px]"),
  head(13, "معدل الطالب", 60, "justify-center"),
  head(14, "درجات شهر ٢", 76, "justify-end pr-px"),
  head(15, "درجات شهر ١", 72, "justify-end pr-px"),
  head(16, "الاسم", 30, "justify-end pr-px"),
  num(5, 12, "3"), num(5, 13, "53"), num(5, 14, "73"), num(5, 15, "33"), ar(5, 16, "احمد", 21),
  num(6, 13, "73.5"), num(6, 14, "81"), num(6, 15, "66"), ar(6, 16, "علي", 19),
  num(7, 13, "41.5"), num(7, 14, "22"), num(7, 15, "61"), ar(7, 16, "سلام", 22),
  num(8, 13, "88"), ar(8, 14, "لفل", 15), num(8, 15, "88"), ar(8, 16, "محمد", 24),
  num(9, 13, "11.3"), num(9, 15, "11.3"), ar(9, 16, "ريبوار", 29),
  num(10, 13, "69"), num(10, 15, "69"), ar(10, 16, "زيان", 21),
];

function Sheet() {
  const covered = new Set<string>();
  SPECIALS.forEach((s) => {
    for (let r = s.row; r < s.row + s.rs; r++) for (let c = s.col; c < s.col + s.cs; c++) covered.add(r + "-" + c);
  });
  const cells: React.ReactNode[] = [];
  for (let r = 1; r <= 29; r++) {
    for (let c = 1; c <= 16; c++) {
      if (covered.has(r + "-" + c)) continue;
      const active = r === 6 && c === 12;
      cells.push(
        <div key={r + "-" + c} className="relative border-r border-b border-[#68666b] border-b-[#59575c]" style={{ gridRow: r, gridColumn: c }}>
          {active ? (
            <div className="absolute -top-[2px] -right-[2px] -bottom-[2px] -left-[2px] z-10 border-[2px] border-black">
              <div className="absolute -bottom-[3px] -left-[3px] h-[5px] w-[5px] border-t border-r border-white bg-black" />
            </div>
          ) : null}
        </div>
      );
    }
    cells.push(
      <div
        key={"n" + r}
        className={"flex items-center justify-center border-b border-[#87858a] pt-px pl-px text-[14.500px] leading-[16px] tracking-[-0.300px] text-[#2e2c31] [text-shadow:0_0_1px_#666] " + (r === 6 ? "bg-[#f8cd5b]" : r === 29 ? "border-b-0 bg-[#dedddf] pt-[7px]" : "bg-[#dedddf]")}
        style={{ gridRow: r, gridColumn: 17 }}
      >
        {r}
      </div>
    );
  }
  return (
    <div className="flex min-w-0 flex-col">
      <div className={COLS + " h-[19px] border-t border-b border-[#77757a] bg-gradient-to-b from-[#e9e8ea] to-[#cfced1]"}>
        {LETTERS.map((l) => (
          <div
            key={l}
            className={"flex items-center justify-center border-r border-[#77757a] text-[15px] leading-[17px] [text-shadow:0_0_1px_#777] " + (l === "E" ? "bg-gradient-to-b from-[#fbe081] to-[#f5c34d] text-[#4a3c18]" : l === "P" ? "pr-[24px] text-[#454348]" : "text-[#454348]")}
          >
            {l}
          </div>
        ))}
        <div className="flex items-center justify-start pl-[3px]">
          <svg className="h-[10px] w-[9px]" viewBox="0 0 9 10"><path d="M0 0v10h9z" fill="#444247" /></svg>
        </div>
      </div>
      <div className={COLS + " relative h-[511px] overflow-hidden bg-[#fefdff] grid-rows-[18px_18px_17px_20px_18px_18px_18px_18px_18px_18px_18px_18px_17px_18px_18px_18px_17px_18px_18px_18px_17px_18px_18px_18px_17px_18px_18px_18px_10px]"}>
        {cells}
        {SPECIALS.map((s) => (
          <div
            key={s.row + "/" + s.col}
            className={"flex min-w-0 items-center overflow-visible border-r border-b border-[#68666b] border-b-[#59575c] whitespace-nowrap leading-[16px] " + s.cls}
            style={{ gridRow: `${s.row} / span ${s.rs}`, gridColumn: `${s.col} / span ${s.cs}` }}
          >
            {s.body}
          </div>
        ))}
        <svg className="absolute top-[106px] left-[712px] z-20 h-[15px] w-[15px]" viewBox="0 0 15 15">
          <path d="M5 1h5v4h4v5h-4v4H5v-4H1V5h4z" fill="#fff" stroke="#111" strokeWidth="1.300" />
        </svg>
      </div>
    </div>
  );
}

function VScroll() {
  return (
    <div className="flex h-[530px] w-[15px] shrink-0 flex-col border-r border-[#77757a] bg-[#d9d8da]">
      <div className="mx-[2px] h-[7px] border border-[#666] bg-white" />
      <div className="flex h-[14px] items-center justify-center"><svg className="h-[5px] w-[9px]" viewBox="0 0 9 5"><path d="M0 5h9L4.500 0z" fill="#444" /></svg></div>
      <div className="flex h-[475px] w-[13px] flex-col items-center justify-center gap-[2px] border border-[#8b898e] bg-gradient-to-r from-[#fbfafc] to-[#dad9db]">
        <div className="h-px w-[7px] bg-[#777]" /><div className="h-px w-[7px] bg-[#777]" /><div className="h-px w-[7px] bg-[#777]" />
      </div>
      <div className="mt-auto flex h-[16px] items-center justify-center"><svg className="h-[5px] w-[9px]" viewBox="0 0 9 5"><path d="M0 0h9L4.500 5z" fill="#444" /></svg></div>
    </div>
  );
}

function Slant({ first = false }: { first?: boolean }) {
  return (
    <svg className="h-[14px] w-[13px] shrink-0" viewBox="0 0 13 14" fill="none">
      <path d="M0 0h13v14H11z" fill={first ? "#fff" : "#e8e7e9"} />
      <path d="M0 0L11 13.500h2" stroke="#666469" />
    </svg>
  );
}

function BottomBar() {
  return (
    <div className="flex h-[15px] w-full shrink-0 border-t border-[#8b898e] bg-[#dedddf]">
      <div className="ml-[15px] w-[7px] border border-[#77757a] bg-white" />
      <div className="flex w-[70px] items-center border-r border-[#77757a] bg-gradient-to-b from-[#b5b4b7] to-[#dddcde] pl-[4px]">
        <svg className="h-[9px] w-[5px]" viewBox="0 0 5 9"><path d="M5 0v9L0 4.500z" fill="#333" /></svg>
      </div>
      <div className="flex w-[404px] items-center justify-center gap-[2px] border-b border-[#77757a] bg-gradient-to-b from-[#f9f8fa] to-[#e2e1e3]">
        <div className="h-[8px] w-px bg-[#666]" /><div className="h-[8px] w-px bg-[#666]" /><div className="h-[8px] w-px bg-[#666]" />
      </div>
      <div className="flex w-[16px] items-center justify-center border border-[#77757a] bg-[#c5c4c7]">
        <svg className="h-[9px] w-[5px]" viewBox="0 0 5 9"><path d="M0 0v9l5-4.500z" fill="#333" /></svg>
      </div>
      <div className="w-[8px] border border-[#77757a] bg-white" />
      <div className="ml-auto flex h-[14px] items-center">
        <Slant />
        <div className="flex h-[14px] w-[18px] items-center justify-center border-b border-[#77757a] bg-[#e8e7e9]">
          <svg className="h-[11px] w-[17px] shrink-0" viewBox="0 0 17 11" fill="none"><path d="M1 5h9v5M5 1h11v8h-6" stroke="#666" /><path d="M4 4l5-2M7 1v5M5 2l4 3" stroke="#b89030" strokeWidth="1.500" /></svg>
        </div>
        <Slant />
        <div className="flex h-[14px] w-[35px] justify-end border-b border-[#77757a] bg-[#e8e7e9]"><Fit w={27} className="text-[11px] leading-[14px] font-bold text-[#444]">ورقة٣</Fit></div>
        <Slant />
        <div className="flex h-[14px] w-[35px] justify-end border-b border-[#77757a] bg-[#e8e7e9]"><Fit w={26} className="text-[11px] leading-[14px] font-bold text-[#444]">ورقة٢</Fit></div>
        <Slant first />
        <div className="flex h-[14px] w-[45px] justify-center bg-white"><Fit w={32} className="text-[12px] leading-[14px] font-bold text-[#222]">ورقة١</Fit></div>
        <div className="mr-[2px] flex h-[14px] w-[59px] items-center justify-around border-b border-l border-[#77757a]">
          <svg className="h-[6px] w-[6px]" viewBox="0 0 6 6"><path d="M0 0h1v6H0zM6 0v6L2 3z" fill="#444" /></svg>
          <svg className="h-[6px] w-[4px]" viewBox="0 0 4 6"><path d="M4 0v6L0 3z" fill="#444" /></svg>
          <svg className="h-[6px] w-[4px]" viewBox="0 0 4 6"><path d="M0 0v6l4-3z" fill="#444" /></svg>
          <svg className="h-[6px] w-[6px]" viewBox="0 0 6 6"><path d="M5 0h1v6H5zM0 0v6l4-3z" fill="#444" /></svg>
        </div>
      </div>
    </div>
  );
}

function ZoomButton({ plus = false }: { plus?: boolean }) {
  return (
    <svg className="h-[15px] w-[15px] shrink-0" viewBox="0 0 15 15" fill="none">
      <circle cx="7.500" cy="7.500" r="6.500" fill="#f6f6f6" stroke="#444" />
      <path d={plus ? "M3.500 7.500h8M7.500 3.500v8" : "M3.500 7.500h8"} stroke="#333" strokeWidth="1.700" />
    </svg>
  );
}

function StatusBar() {
  return (
    <div className="flex h-[22px] w-full shrink-0 items-center border-b-[2px] border-black bg-[linear-gradient(to_bottom,#e9e8ea_0px,#c4c3c5_4px,#99989a_6px,#686769_8px,#555456_20px)]">
      <div className="ml-[3px]"><ZoomButton plus /></div>
      <div className="h-[2px] w-[42px] bg-[#dcdbdd]" />
      <svg className="h-[12px] w-[9px]" viewBox="0 0 9 12"><path d="M1 .5h7v7L4.500 11 1 7.500z" fill="#fff" stroke="#555" /></svg>
      <div className="h-[2px] w-[43px] bg-[#dcdbdd]" />
      <ZoomButton />
      <Fit w={27} className="ml-[8px] text-[11px] leading-[12px] text-[#222] [text-shadow:0_0_1px_#bbb]">٪١٠٠</Fit>
      <svg className="ml-[11px] h-[9px] w-[10px]" viewBox="0 0 10 9"><path d="M1 0h8v9H1z" fill="#444" /><path d="M3 1v5M7 1v5" stroke="#fff" strokeWidth="2" /></svg>
      <svg className="ml-[9px] h-[9px] w-[9px]" viewBox="0 0 9 9" fill="none"><path d="M0 0h9v9H0z" fill="#444" /><path d="M3 2h4M3 4.500h4M3 7h4M3 2v5" stroke="#ddd" /></svg>
      <div className="ml-[5px] flex h-[18px] w-[18px] items-center justify-center rounded-[2px] border border-[#8a7135] bg-[#f8d97c]">
        <svg className="h-[10px] w-[12px]" viewBox="0 0 12 10" fill="none" stroke="#555"><path d="M.5 .5h11v9H.5zM.5 3.500h11M.5 6.500h11M4 0v10M8 0v10" fill="#fff" /></svg>
      </div>
      <div className="ml-[3px] h-[12px] w-[2px] bg-[#bbb]" />
      <div className="ml-auto h-[13px] w-px bg-[#ddd]" />
      <Fit w={24} className="mr-[7px] ml-[11px] text-[10px] leading-[12px] text-[#222] [text-shadow:0_0_1px_#bbb]">جاهز</Fit>
    </div>
  );
}

export default function App() {
  return (
    <div className={"flex h-[720px] w-[1280px] flex-col overflow-hidden bg-[#15151d] " + FONT}>
      <Header />
      <div className="flex h-[81px] w-[1278px] shrink-0 border-t border-[#77757a]"><Ribbon /></div>
      <div className="w-[1278px] shrink-0"><FormulaBar /></div>
      <div className="flex h-[530px] w-[1278px] shrink-0">
        <VScroll />
        <Sheet />
      </div>
      <div className="w-[1279px] shrink-0"><BottomBar /></div>
      <div className="w-[1279px] shrink-0"><StatusBar /></div>
    </div>
  );
}
